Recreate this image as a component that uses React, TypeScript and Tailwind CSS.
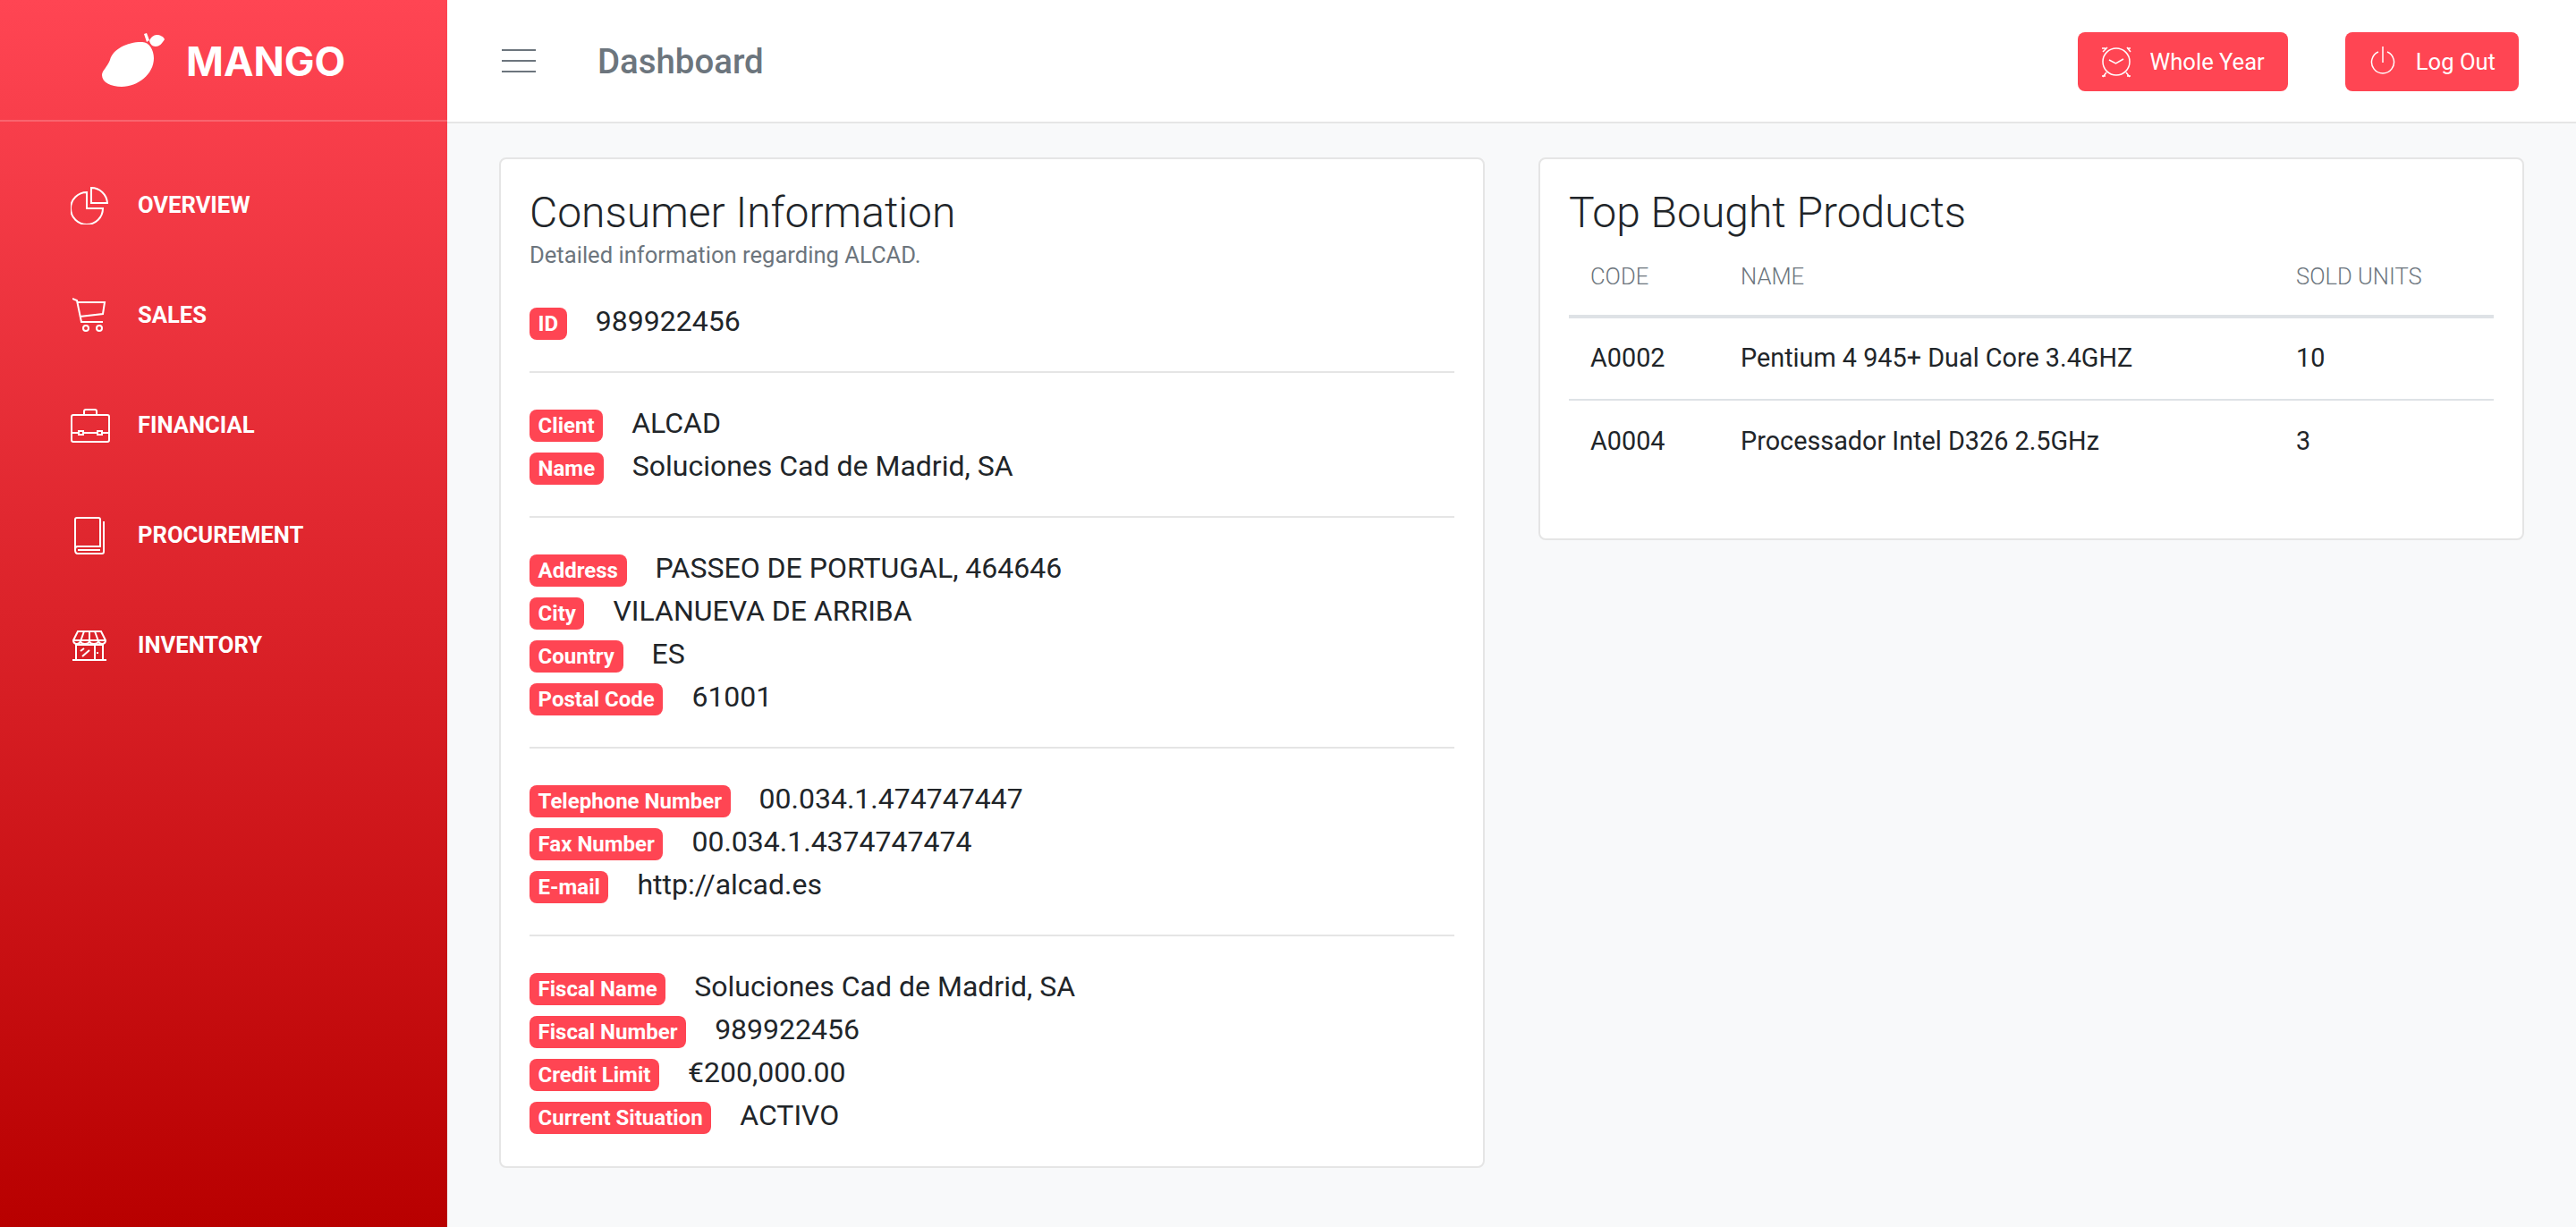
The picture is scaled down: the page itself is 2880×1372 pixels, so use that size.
import React from "react";

const Mango = () => (
  <svg viewBox="0 0 72 62" className="w-[72px] h-[62px]" fill="white">
    <path d="M44 10C52 9 58 18 58 28C58 46 40 60 22 60C10 60 0 55 0 47C0 42 6 38 9 30C12 18 28 10 44 10Z" />
    <path d="M53 9C54 5 58 2 61 2C65 2 69 4 70 7C67 12 64 15 60 15C56 15 54 12 53 9Z" />
    <path d="M47 1L50 0L53 8L50 10Z" />
  </svg>
);

const PieIcon = () => (
  <svg viewBox="0 0 42 42" className="w-[42px] h-[42px]" fill="none" stroke="white" strokeWidth="2">
    <path d="M18 6A18 18 0 1 0 36 24H18Z" />
    <path d="M23 1A18 18 0 0 1 41 18H23Z" />
  </svg>
);

const CartIcon = () => (
  <svg viewBox="0 0 38 40" className="w-[38px] h-[40px] ml-[2px]" fill="none" stroke="white" strokeWidth="2">
    <path d="M0 1L5 3L10 27H34" />
    <path d="M5 5H36L34 18L8 21" />
    <circle cx="15" cy="34" r="3" />
    <circle cx="30" cy="34" r="3" />
  </svg>
);

const BriefcaseIcon = () => (
  <svg viewBox="0 0 44 38" className="w-[44px] h-[38px]" fill="none" stroke="white" strokeWidth="2">
    <rect x="1" y="7" width="42" height="30" rx="2" />
    <path d="M15 7V3C15 2 16 1 17 1H27C28 1 29 2 29 3V7" />
    <path d="M1 27H9M14 27H30M35 27H43" />
    <rect x="9" y="25" width="5" height="4" />
    <rect x="30" y="25" width="5" height="4" />
  </svg>
);

const BookIcon = () => (
  <svg viewBox="0 0 34 42" className="w-[34px] h-[42px] ml-[4px]" fill="none" stroke="white" strokeWidth="2">
    <path d="M4 33H29V3C29 2 28 1 27 1H3C2 1 1 2 1 3V37C1 40 2 41 4 41H31C32 41 33 40 33 39V5" />
    <path d="M1 36C1 34 2 33 4 33M4 37H29" />
  </svg>
);

const StoreIcon = () => (
  <svg viewBox="0 0 38 34" className="w-[38px] h-[34px] ml-[2px]" fill="none" stroke="white" strokeWidth="2">
    <path d="M6 1H32L37 11C37 16 30 16 29 12C28 16 20 16 19 12C18 16 10 16 9 12C8 16 1 16 1 11Z" />
    <path d="M13 1L9 12M19 1V12M25 1L29 12M1 11H37" />
    <path d="M4 15V33M34 15V33M0 33H38M25 16V33M4 16H34" />
    <path d="M9 23L13 20M11 29L19 22" />
    <path d="M28 24V26" />
  </svg>
);

const AlarmIcon = () => (
  <svg viewBox="0 0 34 36" className="w-[34px] h-[36px]" fill="none" stroke="white" strokeWidth="1.5">
    <circle cx="17" cy="18" r="15" />
    <path d="M9 16L16.500 20L25 15" />
    <path d="M2 7L7 2M1 3H5M29 2L33 7M29 3H33M6 30L2 35M1 34H5M28 30L32 35M29 34H33" />
  </svg>
);

const PowerIcon = () => (
  <svg viewBox="0 0 28 34" className="w-[28px] h-[34px]" fill="none" stroke="white" strokeWidth="1.5">
    <path d="M9 6A12.500 12.500 0 1 0 19 6" />
    <path d="M14 0V18" />
  </svg>
);

const navItems = [
  { label: "OVERVIEW", icon: <PieIcon /> },
  { label: "SALES", icon: <CartIcon /> },
  { label: "FINANCIAL", icon: <BriefcaseIcon /> },
  { label: "PROCUREMENT", icon: <BookIcon /> },
  { label: "INVENTORY", icon: <StoreIcon /> },
];

const sections = [
  [["ID", "989922456"]],
  [
    ["Client", "ALCAD"],
    ["Name", "Soluciones Cad de Madrid, SA"],
  ],
  [
    ["Address", "PASSEO DE PORTUGAL, 464646"],
    ["City", "VILANUEVA DE ARRIBA"],
    ["Country", "ES"],
    ["Postal Code", "61001"],
  ],
  [
    ["Telephone Number", "00.034.1.474747447"],
    ["Fax Number", "00.034.1.4374747474"],
    ["E-mail", "http://alcad.es"],
  ],
  [
    ["Fiscal Name", "Soluciones Cad de Madrid, SA"],
    ["Fiscal Number", "989922456"],
    ["Credit Limit", "€200,000.00"],
    ["Current Situation", "ACTIVO"],
  ],
];

const products = [
  ["A0002", "Pentium 4 945+ Dual Core 3.4GHZ", "10"],
  ["A0004", "Processador Intel D326 2.5GHz", "3"],
];

export default function App() {
  return (
    <div className="flex min-h-screen font-['Roboto',sans-serif] text-[#212529]">
      {/* Sidebar */}
      <aside className="w-[500px] shrink-0 bg-linear-to-b/srgb from-[#ff4553] to-[#b80000] text-white">
        <div className="h-[136px] flex items-center pl-[114px] pt-[2px] border-b-2 border-white/20">
          <Mango />
          <span className="ml-[22px] font-['Inter',sans-serif] font-bold text-[45px] leading-none">MANGO</span>
        </div>
        <nav className="pt-[32px]">
          {navItems.map((item) => (
            <div key={item.label} className="flex items-center h-[123px] pl-[79px]">
              <div className="w-[75px] flex items-center">{item.icon}</div>
              <span className="font-bold text-[25.6px]">{item.label}</span>
            </div>
          ))}
        </nav>
      </aside>

      <div className="flex-1 flex flex-col bg-[#f8f9fa]">
        {/* Top bar */}
        <header className="h-[138px] flex items-center bg-white border-b-2 border-[#e6e6e6] pt-[2px] pl-[61px] pr-[64px]">
          <div className="w-[38px] -mt-[2px] flex flex-col gap-[10px]">
            <div className="h-[2px] bg-[#6c757d]" />
            <div className="h-[2px] bg-[#6c757d]" />
            <div className="h-[2px] bg-[#6c757d]" />
          </div>
          <span className="ml-[69px] text-[38.4px] font-medium text-[#6c757d]">Dashboard</span>
          <div className="ml-auto flex items-center gap-[64px]">
            <button className="h-[66px] flex items-center gap-[21px] px-[26px] bg-[#ff4553] rounded-lg text-white text-[25.6px]">
              <AlarmIcon />
              Whole Year
            </button>
            <button className="h-[66px] flex items-center gap-[23px] pl-[28px] pr-[26px] bg-[#ff4553] rounded-lg text-white text-[25.6px]">
              <PowerIcon />
              Log Out
            </button>
          </div>
        </header>

        {/* Content */}
        <main className="grid grid-cols-2 gap-[60px] items-start pt-[38px] pl-[58px] pr-[58px] pb-[66px]">
          <section className="bg-white border-2 border-[#e5e5e5] rounded-lg px-[32px] pt-[32px] pb-[33px]">
            <h3 className="text-[48px] font-light leading-[56px]">Consumer Information</h3>
            <p className="text-[25.6px] leading-[38.4px] text-[#6c757d]">Detailed information regarding ALCAD.</p>
            <div className="mt-[30.6px]">
              {sections.map((rows, i) => (
                <div key={i} className={i > 0 ? "border-t-2 border-[#e5e5e5] mt-[32px] pt-[32px]" : ""}>
                  {rows.map(([label, value]) => (
                    <div key={label} className="flex items-baseline gap-[32px] h-[48px]">
                      <span className="bg-[#ff4553] text-white font-bold text-[24px] leading-none px-[9.6px] py-[6px] rounded-lg">
                        {label}
                      </span>
                      <span className="text-[32px] leading-[48px]">{value}</span>
                    </div>
                  ))}
                </div>
              ))}
            </div>
          </section>

          <section className="bg-white border-2 border-[#e5e5e5] rounded-lg px-[32px] pt-[32px] pb-[62px]">
            <h3 className="text-[48px] font-light leading-[56px]">Top Bought Products</h3>
            <table className="w-full mt-[8px] text-[28.8px] text-left">
              <thead>
                <tr className="border-b-4 border-[#dee2e6] text-[#6c757d] text-[25.6px]">
                  <th className="w-[168px] h-[80px] pl-[24px] pb-[8px] font-light">CODE</th>
                  <th className="w-[621px] pl-[24px] pb-[8px] font-light">NAME</th>
                  <th className="pl-[24px] pb-[8px] font-light">SOLD UNITS</th>
                </tr>
              </thead>
              <tbody>
                {products.map((row) => (
                  <tr key={row[0]} className="border-b-2 border-[#dee2e6] last:border-b-0">
                    {row.map((cell) => (
                      <td key={cell} className="h-[93px] pl-[24px]">
                        {cell}
                      </td>
                    ))}
                  </tr>
                ))}
              </tbody>
            </table>
          </section>
        </main>
      </div>
    </div>
  );
}
